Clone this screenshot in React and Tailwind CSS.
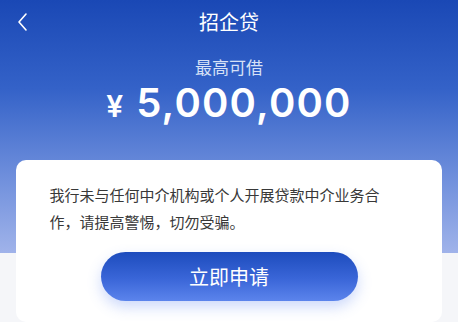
import React from "react";

export default function App() {
  return (
    <div className="w-[458px] h-[322px] overflow-hidden bg-[#f5f6f9] flex flex-col" style={{ fontFamily: '"Noto Sans CJK SC", "Noto Sans", sans-serif' }}>
      <div className="h-[253px] shrink-0 bg-[linear-gradient(180deg,#1a48b5_0%,#3462c8_35%,#6f8fdc_70%,#a0b3ea_100%)] flex flex-col items-center">
        <div className="w-full h-[44px] relative flex items-center justify-center">
          <svg className="absolute left-[16px] top-[12px]" width="14" height="20" viewBox="0 0 14 20" fill="none">
            <path d="M10 2 L3 10 L10 18" stroke="white" strokeWidth="1.6" strokeLinecap="round" strokeLinejoin="round" />
          </svg>
          <span className="text-white text-[20px] leading-none">招企贷</span>
        </div>
        <div className="mt-[14px] text-[17px] leading-none text-[#d6e0f6]">最高可借</div>
        <div className="mt-[8px] flex items-baseline text-white leading-none" style={{ fontFamily: 'Inter, Roboto, sans-serif' }}>
          <span className="text-[30px] font-semibold mr-[13px]">¥</span>
          <span className="text-[40px] font-semibold tracking-[1.2px]">5,000,000</span>
        </div>
      </div>
      <div className="mx-[16px] -mt-[93px] bg-white rounded-[10px] flex flex-col items-center pt-[21px] h-[200px]">
        <p className="w-[359px] text-[15px] leading-[27px] text-[#383838] pr-[14px]">
          我行未与任何中介机构或个人开展贷款中介业务合作，请提高警惕，切勿受骗。
        </p>
        <button className="mt-[17px] w-[257px] h-[49px] rounded-full bg-[linear-gradient(180deg,#1d4cbd_0%,#3a66d8_55%,#5b84ec_100%)] text-white text-[20px] shadow-[0_6px_14px_rgba(90,130,240,0.3)]">
          立即申请
        </button>
      </div>
    </div>
  );
}
